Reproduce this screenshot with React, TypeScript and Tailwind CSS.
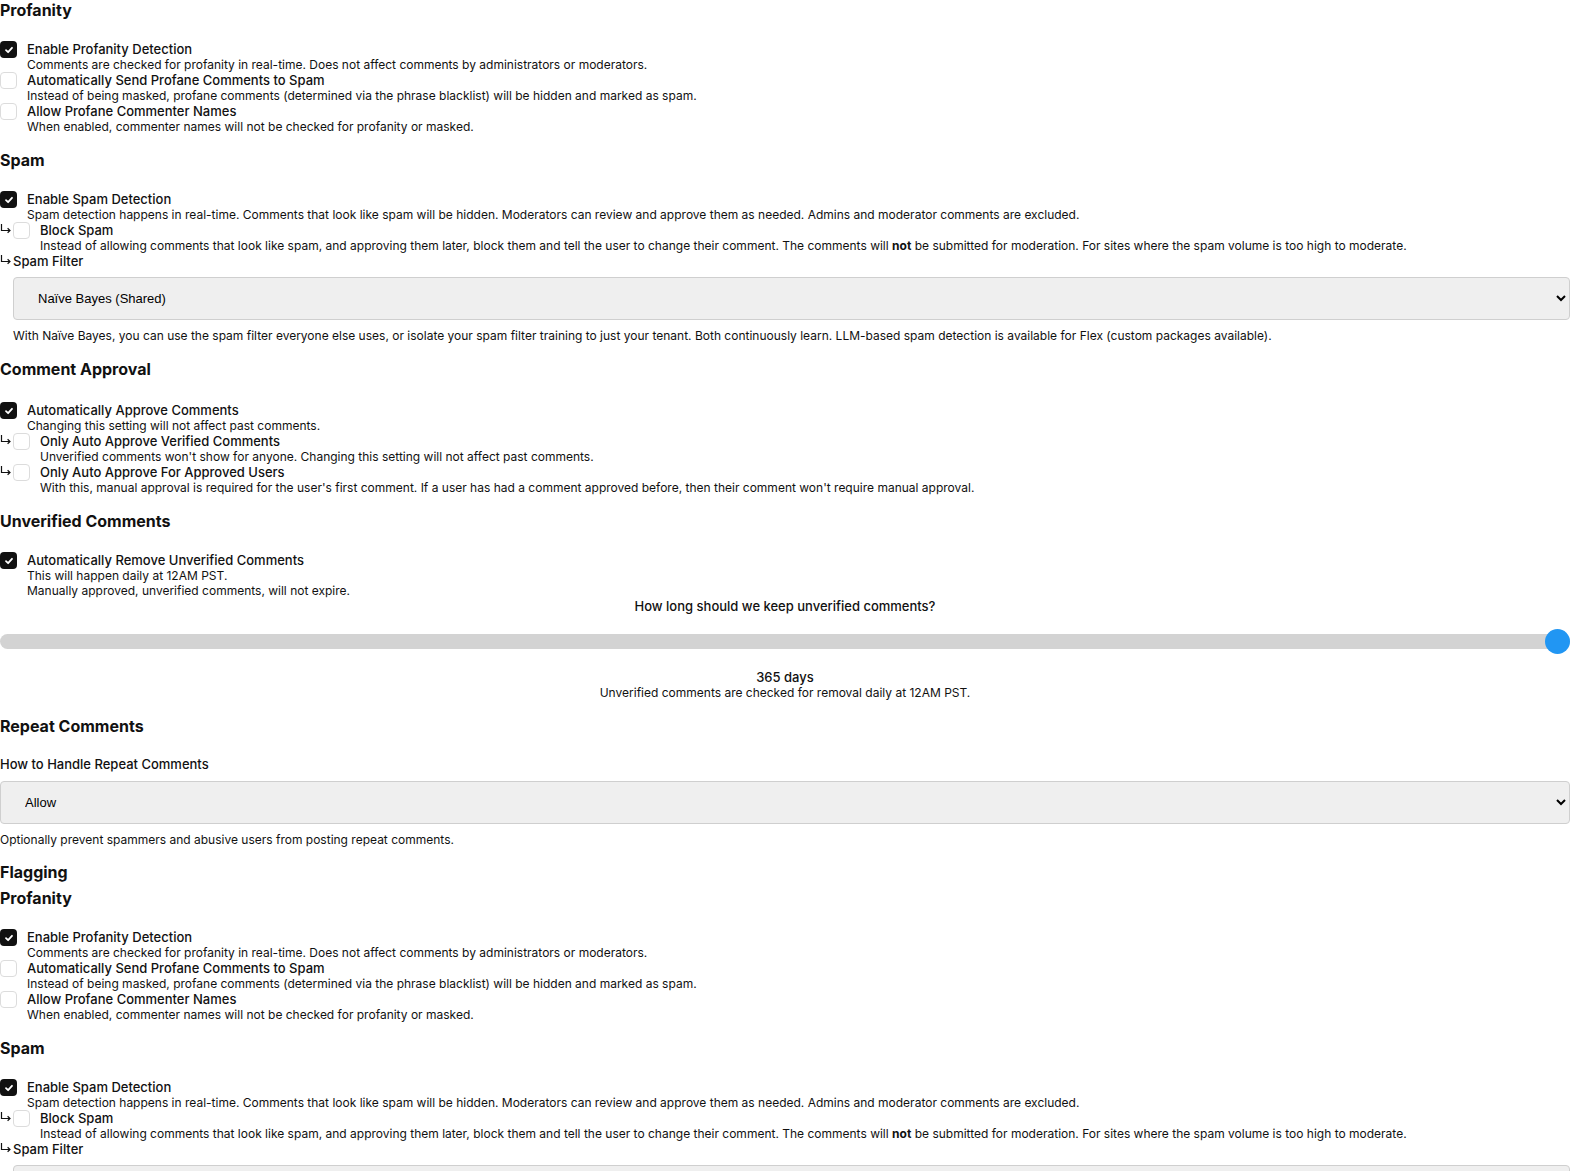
import React from "react";

function Check({ checked }: { checked: boolean }) {
  return checked ? (
    <span className="flex h-[17px] w-[17px] shrink-0 items-center justify-center rounded-[4px] bg-[#111]">
      <svg width="10" height="10" viewBox="0 0 10 10">
        <path d="M2 5.2 L4.1 7.2 L8 2.8" fill="none" stroke="white" strokeWidth="1.8" strokeLinecap="round" strokeLinejoin="round" />
      </svg>
    </span>
  ) : (
    <span className="block h-[17px] w-[17px] shrink-0 rounded-[4px] border border-[#dcdcdc] bg-white" />
  );
}

function Arrow() {
  return (
    <span className="w-[13px] shrink-0 pt-[2px]">
      <svg width="11" height="10" viewBox="0 0 11 10" className="block">
        <path d="M1.5 0 V6.5 H10" fill="none" stroke="#111" strokeWidth="1.2" />
        <path d="M7.6 4.2 L10 6.5 L7.6 8.8" fill="none" stroke="#111" strokeWidth="1.2" strokeLinejoin="miter" />
      </svg>
    </span>
  );
}

function Item({
  checked,
  label,
  desc,
  nested,
}: {
  checked: boolean;
  label: string;
  desc: React.ReactNode;
  nested?: boolean;
}) {
  return (
    <div className="flex">
      {nested && <Arrow />}
      <Check checked={checked} />
      <div className="ml-[10px] flex flex-col">
        <div className="text-[13px] font-medium leading-4">{label}</div>
        <div className="text-[12px] leading-[15px]">{desc}</div>
      </div>
    </div>
  );
}

function H({ children, className = "" }: { children: React.ReactNode; className?: string }) {
  return <h2 className={"text-base font-bold leading-5 " + className}>{children}</h2>;
}

function Profanity() {
  return (
    <div>
      <H className="mb-[21px]">Profanity</H>
      <Item
        checked
        label="Enable Profanity Detection"
        desc="Comments are checked for profanity in real-time. Does not affect comments by administrators or moderators."
      />
      <Item
        checked={false}
        label="Automatically Send Profane Comments to Spam"
        desc="Instead of being masked, profane comments (determined via the phrase blacklist) will be hidden and marked as spam."
      />
      <Item
        checked={false}
        label="Allow Profane Commenter Names"
        desc="When enabled, commenter names will not be checked for profanity or masked."
      />
    </div>
  );
}

function Select({ value, className = "" }: { value: string; className?: string }) {
  return (
    <select
      defaultValue={value}
      className={
        "block h-[43px] w-full rounded-[4px] border border-[#cfcfcf] bg-[#efefef] font-['Liberation_Sans'] text-[13px] text-black " +
        className
      }
    >
      <option>{value}</option>
    </select>
  );
}

function Spam() {
  return (
    <div className="mt-4">
      <H className="mb-[21px]">Spam</H>
      <Item
        checked
        label="Enable Spam Detection"
        desc="Spam detection happens in real-time. Comments that look like spam will be hidden. Moderators can review and approve them as needed. Admins and moderator comments are excluded."
      />
      <Item
        nested
        checked={false}
        label="Block Spam"
        desc={
          <>
            Instead of allowing comments that look like spam, and approving them later, block them and tell the user to change their comment. The comments will <b>not</b> be submitted for moderation. For sites where the spam volume is too high to moderate.
          </>
        }
      />
      <div className="flex">
        <Arrow />
        <div className="text-[13px] font-medium leading-4">Spam Filter</div>
      </div>
      <div className="ml-[13px] mt-2">
        <Select value="Naïve Bayes (Shared)" className="pl-[20px] pr-[6px]" />
        <p className="mt-2 text-[12px] leading-[15px]">
          With Naïve Bayes, you can use the spam filter everyone else uses, or isolate your spam filter training to just your tenant. Both continuously learn. LLM-based spam detection is available for Flex (custom packages available).
        </p>
      </div>
    </div>
  );
}

export default function App() {
  return (
    <div className="bg-white font-['Inter',sans-serif] text-[#111]">
      <Profanity />
      <Spam />

      <div className="mt-4">
        <H className="mb-[23px]">Comment Approval</H>
        <Item checked label="Automatically Approve Comments" desc="Changing this setting will not affect past comments." />
        <Item
          nested
          checked={false}
          label="Only Auto Approve Verified Comments"
          desc="Unverified comments won't show for anyone. Changing this setting will not affect past comments."
        />
        <Item
          nested
          checked={false}
          label="Only Auto Approve For Approved Users"
          desc="With this, manual approval is required for the user's first comment. If a user has had a comment approved before, then their comment won't require manual approval."
        />
      </div>

      <div className="mt-4">
        <H className="mb-[21px]">Unverified Comments</H>
        <Item
          checked
          label="Automatically Remove Unverified Comments"
          desc={
            <>
              This will happen daily at 12AM PST.
              <br />
              Manually approved, unverified comments, will not expire.
            </>
          }
        />
        <div className="text-center text-[13px] font-medium leading-4">How long should we keep unverified comments?</div>
        <div className="relative mb-[15px] mt-[15px] flex h-[25px] items-center">
          <div className="h-[15px] w-full rounded-full bg-[#d3d3d3]" />
          <div className="absolute right-0 top-0 h-[25px] w-[25px] rounded-full bg-[#2196f3]" />
        </div>
        <div className="text-center text-[13px] font-medium leading-4">365 days</div>
        <div className="text-center text-[12px] leading-[15px]">Unverified comments are checked for removal daily at 12AM PST.</div>
      </div>

      <div className="mt-4">
        <H className="mb-5">Repeat Comments</H>
        <div className="text-[13px] font-medium leading-4">How to Handle Repeat Comments</div>
        <Select value="Allow" className="mt-[9px] pl-[20px] pr-[6px]" />
        <p className="mt-2 text-[12px] leading-[15px]">Optionally prevent spammers and abusive users from posting repeat comments.</p>
      </div>

      <div className="mt-[15px]">
        <H className="mb-[6px]">Flagging</H>
        <Profanity />
        <Spam />
      </div>
    </div>
  );
}
